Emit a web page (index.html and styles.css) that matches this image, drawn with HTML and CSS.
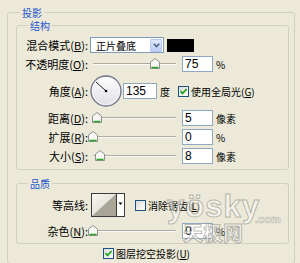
FILE: index.html
```html
<!DOCTYPE html>
<html lang="zh-CN">
<head>
    <meta charset="UTF-8">
    <meta name="viewport" content="width=device-width, initial-scale=1.0">
    <title>投影</title>
    <link rel="stylesheet" href="styles.css">
</head>
<body>
    <fieldset class="group outer">
        <legend class="outer-legend">投影</legend>
        <div class="outer-body">
            <fieldset class="group">
                <legend class="inner-legend">结构</legend>
                <div class="rows">
                    <div class="row">
                        <span class="lbl">混合模式(<u>B</u>):</span>
                        <div class="select">
                            <span class="select-text">正片叠底</span>
                            <span class="drop"><svg width="7" height="5" viewBox="0 0 7 5"><path d="M0.8 0.8 L3.5 3.6 L6.2 0.8" fill="none" stroke="#4d6185" stroke-width="1.6"/></svg></span>
                        </div>
                        <div class="swatch"></div>
                    </div>
                    <div class="row">
                        <span class="lbl">不透明度(<u>O</u>):</span>
                        <div class="slider">
                            <div class="track"></div>
                            <span class="thumb" style="left: 62px;"><svg width="10" height="11" viewBox="0 0 10 11"><path d="M0.5 4 L5 0.5 L9.5 4 V10.5 H0.5 Z" fill="#f7f7f4" stroke="#8e8f8f"/><path d="M1.5 9.5 H8.5" stroke="#2ca12c" stroke-width="1.5"/></svg></span>
                        </div>
                        <input class="num" type="text" value="75">
                        <span class="unit">%</span>
                    </div>
                    <div class="row row-dial">
                        <span class="lbl">角度(<u>A</u>):</span>
                        <svg class="dial" width="32" height="32" viewBox="0 0 32 32">
                            <defs>
                                <linearGradient id="dialFill" x1="0" y1="0" x2="0" y2="1">
                                    <stop offset="0" stop-color="#ffffff"/>
                                    <stop offset="1" stop-color="#dfdfe4"/>
                                </linearGradient>
                            </defs>
                            <circle cx="16" cy="16" r="15" fill="url(#dialFill)" stroke="#6f7389" stroke-width="1.3"/>
                            <circle cx="16" cy="16" r="13.6" fill="none" stroke="#f4f4f7" stroke-width="1"/>
                            <line x1="16" y1="16" x2="6" y2="7" stroke="#222" stroke-width="1"/>
                            <circle cx="16" cy="16" r="1.3" fill="#000"/>
                        </svg>
                        <input class="num num-angle" type="text" value="135">
                        <span class="unit">度</span>
                        <label class="opt opt-global"><span class="check"><svg width="9" height="9" viewBox="0 0 9 9"><path d="M1.5 4.2 L3.6 6.4 L7.6 2" fill="none" stroke="#21a121" stroke-width="1.7"/></svg></span>使用全局光(<u>G</u>)</label>
                    </div>
                    <div class="row">
                        <span class="lbl">距离(<u>D</u>):</span>
                        <div class="slider">
                            <div class="track"></div>
                            <span class="thumb" style="left: 4px;"><svg width="10" height="11" viewBox="0 0 10 11"><path d="M0.5 4 L5 0.5 L9.5 4 V10.5 H0.5 Z" fill="#f7f7f4" stroke="#8e8f8f"/><path d="M1.5 9.5 H8.5" stroke="#2ca12c" stroke-width="1.5"/></svg></span>
                        </div>
                        <input class="num" type="text" value="5">
                        <span class="unit">像素</span>
                    </div>
                    <div class="row">
                        <span class="lbl">扩展(<u>R</u>):</span>
                        <div class="slider">
                            <div class="track"></div>
                            <span class="thumb" style="left: 0px;"><svg width="10" height="11" viewBox="0 0 10 11"><path d="M0.5 4 L5 0.5 L9.5 4 V10.5 H0.5 Z" fill="#f7f7f4" stroke="#8e8f8f"/><path d="M1.5 9.5 H8.5" stroke="#2ca12c" stroke-width="1.5"/></svg></span>
                        </div>
                        <input class="num" type="text" value="0">
                        <span class="unit">%</span>
                    </div>
                    <div class="row">
                        <span class="lbl">大小(<u>S</u>):</span>
                        <div class="slider">
                            <div class="track"></div>
                            <span class="thumb" style="left: 7px;"><svg width="10" height="11" viewBox="0 0 10 11"><path d="M0.5 4 L5 0.5 L9.5 4 V10.5 H0.5 Z" fill="#f7f7f4" stroke="#8e8f8f"/><path d="M1.5 9.5 H8.5" stroke="#2ca12c" stroke-width="1.5"/></svg></span>
                        </div>
                        <input class="num" type="text" value="8">
                        <span class="unit">像素</span>
                    </div>
                </div>
            </fieldset>

            <fieldset class="group quality">
                <legend class="inner-legend">品质</legend>
                <div class="rows rows-quality">
                    <div class="row row-contour">
                        <span class="lbl">等高线:</span>
                        <svg class="contour" width="34" height="24" viewBox="0 0 34 24">
                            <defs>
                                <linearGradient id="contourBg" x1="0" y1="0" x2="1" y2="1">
                                    <stop offset="0" stop-color="#f6f5ef"/>
                                    <stop offset="1" stop-color="#d9d7cc"/>
                                </linearGradient>
                            </defs>
                            <rect x="0.5" y="0.5" width="33" height="23" fill="#fbfbf8" stroke="#3c3c3c"/>
                            <polygon points="1,1 25,1 1,23" fill="url(#contourBg)"/>
                            <polygon points="25,1 25,23 1,23" fill="#a9a597"/>
                            <line x1="25.5" y1="1" x2="25.5" y2="23" stroke="#3c3c3c"/>
                            <polygon points="27.5,9.5 31.5,9.5 29.5,12" fill="#000"/>
                        </svg>
                        <label class="opt opt-aa"><span class="check"></span>消除锯齿(<u>L</u>)</label>
                    </div>
                    <div class="row">
                        <span class="lbl">杂色(<u>N</u>):</span>
                        <div class="slider">
                            <div class="track"></div>
                            <span class="thumb" style="left: 0px;"><svg width="10" height="11" viewBox="0 0 10 11"><path d="M0.5 4 L5 0.5 L9.5 4 V10.5 H0.5 Z" fill="#f7f7f4" stroke="#8e8f8f"/><path d="M1.5 9.5 H8.5" stroke="#2ca12c" stroke-width="1.5"/></svg></span>
                        </div>
                        <input class="num" type="text" value="0">
                        <span class="unit">%</span>
                    </div>
                </div>
            </fieldset>

            <label class="opt opt-knockout"><span class="check"><svg width="9" height="9" viewBox="0 0 9 9"><path d="M1.5 4.2 L3.6 6.4 L7.6 2" fill="none" stroke="#21a121" stroke-width="1.7"/></svg></span>图层挖空投影(<u>U</u>)</label>
        </div>
    </fieldset>

    <div class="watermark">
        <span class="wm-logo">yösky</span>
        <span class="wm-com">.com</span>
        <span class="wm-cn">天极网</span>
    </div>
</body>
</html>
```

FILE: styles.css
```css
body {
    margin: 0;
    width: 300px;
    height: 263px;
    overflow: hidden;
    position: relative;
    background-color: #ece9d8;
    font-family: "Noto Sans CJK SC", "Liberation Sans", sans-serif;
    font-size: 11px;
    color: #000;
}
u {
    text-decoration: underline;
}
.group {
    margin: 0;
    padding: 0;
    min-width: 0;
    border: 1px solid #d0d0bf;
    border-radius: 3px;
}
.group legend {
    padding: 0 2px;
    font-size: 10px;
    line-height: 13px;
    color: #2155d0;
}
.outer {
    margin: 6px 0 0 7px;
    width: 288px;
    height: 258px;
    box-sizing: border-box;
    overflow: hidden;
}
.outer-legend {
    margin-left: 12px;
}
.inner-legend {
    margin-left: 11px;
}
.outer-body {
    padding: 0 5px 0 8px;
}
.rows {
    display: flex;
    flex-direction: column;
    gap: 3px;
    padding: 5px 0 5px 0;
}
.rows-quality {
    gap: 6px;
    padding: 3px 0 4px 0;
}
.quality {
    margin-top: 7px;
}
.row {
    display: flex;
    align-items: center;
    height: 16px;
}
.row-dial {
    height: 32px;
}
.row-contour {
    height: 24px;
}
.lbl {
    flex: none;
    width: 71px;
    text-align: right;
    white-space: nowrap;
}
.select {
    flex: none;
    display: flex;
    align-items: center;
    margin-left: 2px;
    width: 74px;
    height: 16px;
    box-sizing: border-box;
    border: 1px solid #7f9db9;
    background-color: #fff;
}
.select-text {
    flex: 1;
    padding-left: 5px;
    font-size: 10px;
}
.drop {
    display: flex;
    align-items: center;
    justify-content: center;
    width: 12px;
    height: 13px;
    margin-right: 1px;
    box-sizing: border-box;
    border: 1px solid #b9c9ef;
    border-radius: 1px;
    background: linear-gradient(#e0e8fd, #bccdf6);
}
.swatch {
    flex: none;
    margin-left: 3px;
    width: 27px;
    height: 13px;
    background-color: #000;
}
.slider {
    flex: none;
    position: relative;
    width: 88px;
    height: 16px;
}
.track {
    margin: 7px 0 0 5px;
    height: 1px;
    background-color: #aeaca0;
    border-bottom: 1px solid #fbfaf6;
}
.thumb {
    position: absolute;
    top: 2px;
    width: 10px;
    height: 11px;
    line-height: 0;
}
.num {
    flex: none;
    margin: 0 0 0 6px;
    width: 31px;
    height: 16px;
    box-sizing: border-box;
    padding: 0 2px;
    border: 1px solid #8fa8c2;
    background-color: #fff;
    font-family: "Liberation Sans", sans-serif;
    font-size: 12px;
    color: #000;
    outline: none;
}
.num-angle {
    margin-left: 1px;
    width: 34px;
}
.unit {
    margin-left: 3px;
    font-size: 10px;
}
.dial {
    flex: none;
    margin-left: 2px;
}
.contour {
    flex: none;
    margin-left: 3px;
}
.opt {
    display: flex;
    align-items: center;
    font-size: 10px;
    white-space: nowrap;
}
.check {
    display: flex;
    align-items: center;
    justify-content: center;
    flex: none;
    width: 11px;
    height: 11px;
    margin-right: 2px;
    box-sizing: border-box;
    border: 1px solid #1c5180;
    background: linear-gradient(135deg, #dcdcd5, #ffffff);
}
.opt-global {
    margin-left: 8px;
}
.opt-aa {
    margin-left: 10px;
}
.opt-knockout {
    margin: 3px 0 0 87px;
    height: 13px;
}
.watermark {
    position: absolute;
    left: 166px;
    top: 186px;
    width: 120px;
    height: 62px;
    pointer-events: none;
}
.wm-logo {
    position: absolute;
    left: 1px;
    top: 5px;
    font-family: "Liberation Sans", sans-serif;
    font-weight: bold;
    font-size: 31px;
    line-height: 31px;
    letter-spacing: 1px;
    color: rgba(255, 255, 255, 0.45);
    -webkit-text-stroke: 1px rgba(120, 120, 110, 0.5);
}
.wm-com {
    position: absolute;
    left: 89px;
    top: 28px;
    font-family: "Liberation Sans", sans-serif;
    font-weight: bold;
    font-size: 11px;
    line-height: 11px;
    color: rgba(255, 255, 255, 0.45);
    -webkit-text-stroke: 0.6px rgba(120, 120, 110, 0.5);
}
.wm-cn {
    position: absolute;
    left: 17px;
    top: 36px;
    font-weight: bold;
    font-size: 20px;
    line-height: 22px;
    color: rgba(255, 255, 255, 0.5);
    -webkit-text-stroke: 1px rgba(120, 120, 110, 0.5);
}
```
